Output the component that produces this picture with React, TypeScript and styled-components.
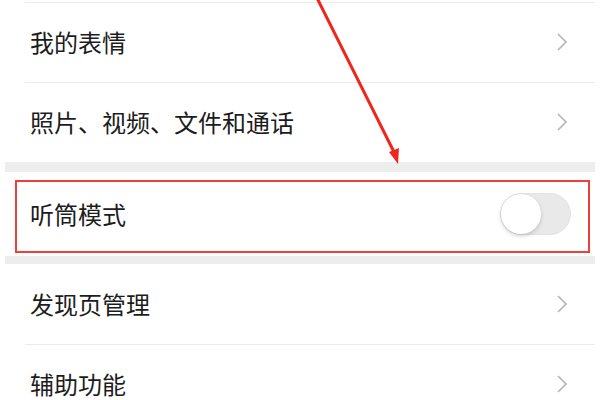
import React from 'react'
import styled, { createGlobalStyle } from 'styled-components'

const GlobalStyle = createGlobalStyle`
  html, body {
    margin: 0;
    padding: 0;
    background: #ffffff;
  }
  body {
    font-family: "Noto Sans CJK SC", "Noto Sans", sans-serif;
    width: 600px;
    height: 400px;
    overflow: hidden;
  }
`

const Page = styled.div`
  position: relative;
  width: 600px;
  height: 400px;
  overflow: hidden;
  background: #fff;
`

const List = styled.div`
  margin: 0 5px;
  padding-top: 2px;
  display: flex;
  flex-direction: column;
`

const Group = styled.div`
  background: #fff;
  display: flex;
  flex-direction: column;
`

const Gap = styled.div<{ $h: number }>`
  height: ${(p) => p.$h}px;
  background: #ededed;
`

const Row = styled.div<{ $h?: number; $line?: boolean }>`
  position: relative;
  height: ${(p) => p.$h ?? 80}px;
  box-sizing: border-box;
  display: flex;
  align-items: center;
  justify-content: space-between;
  padding: 0 27px 0 25px;
  &::before {
    content: '';
    display: ${(p) => (p.$line ? 'block' : 'none')};
    position: absolute;
    top: 0;
    left: 20px;
    right: 0;
    height: 1px;
    background: #ececec;
  }
`

const Label = styled.span`
  font-size: 24px;
  color: #1c1c1c;
  letter-spacing: 0;
  line-height: 1;
`

const Chevron = () => (
  <svg width="12" height="20" viewBox="0 0 12 20">
    <polyline points="2,2 10,10 2,18" fill="none" stroke="#b4b4b4" strokeWidth="1.6" />
  </svg>
)

const Track = styled.div`
  width: 71px;
  height: 42px;
  border-radius: 21px;
  background: #e9e9e9;
  box-sizing: border-box;
  border: 1px solid #e2e2e2;
  position: relative;
  margin-right: -3px;
`

const Knob = styled.div`
  position: absolute;
  top: 0;
  left: 0;
  width: 40px;
  height: 40px;
  border-radius: 50%;
  background: #ffffff;
  box-shadow: 0 2px 4px rgba(0, 0, 0, 0.18);
`

const Highlight = styled.div`
  position: absolute;
  top: 8px;
  left: 10px;
  right: 5px;
  bottom: 3px;
  border: 2px solid #ec4038;
  pointer-events: none;
`

const Arrow = styled.svg`
  position: absolute;
  top: 0;
  left: 0;
  pointer-events: none;
`

export default function App() {
  return (
    <Page>
      <GlobalStyle />
      <List>
        <Group>
          <Row $line>
            <Label>我的表情</Label>
            <Chevron />
          </Row>
          <Row $line>
            <Label>照片、视频、文件和通话</Label>
            <Chevron />
          </Row>
        </Group>
        <Gap $h={10} />
        <Group>
          <Row $h={84}>
            <Label>听筒模式</Label>
            <Track>
              <Knob />
            </Track>
            <Highlight />
          </Row>
        </Group>
        <Gap $h={8} />
        <Group>
          <Row>
            <Label>发现页管理</Label>
            <Chevron />
          </Row>
          <Row $line>
            <Label>辅助功能</Label>
            <Chevron />
          </Row>
        </Group>
      </List>
      <Arrow width="600" height="400" viewBox="0 0 600 400">
        <line x1="317" y1="-2" x2="394" y2="152" stroke="#f0261c" strokeWidth="3" />
        <polygon points="398,164 389,152 399,148" fill="#f0261c" />
      </Arrow>
    </Page>
  )
}
